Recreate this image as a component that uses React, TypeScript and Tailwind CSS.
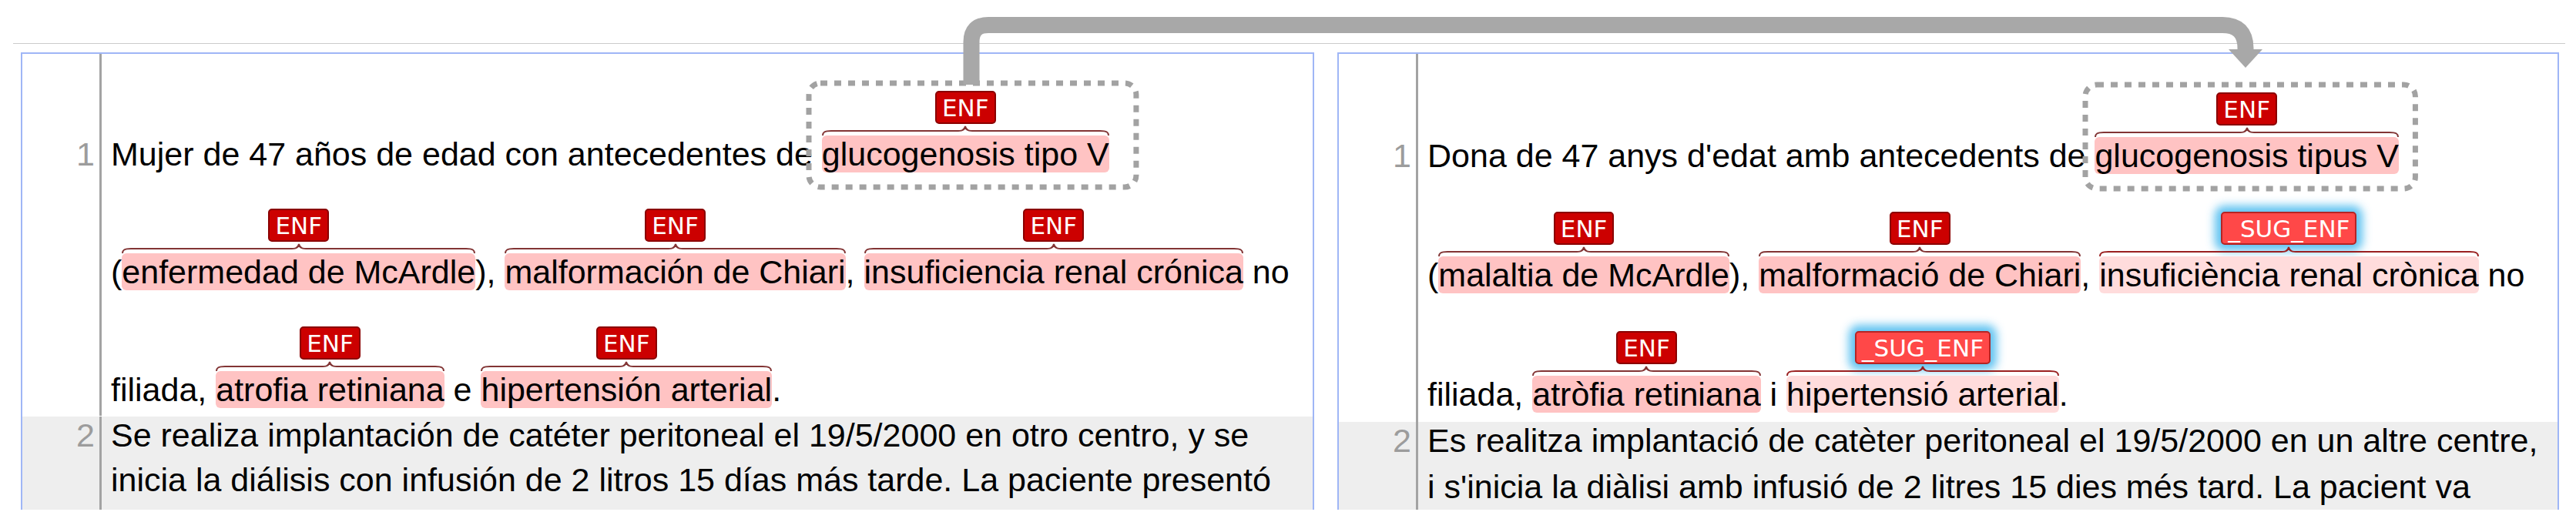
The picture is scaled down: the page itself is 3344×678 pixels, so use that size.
import React from "react";

type Ann = { t: string; sug?: boolean; box?: "L" | "R" };
type Seg = string | Ann;

function Label({ sug }: { sug?: boolean }) {
  return (
    <div
      className={`flex h-[43px] shrink-0 items-center justify-center rounded-[5px] border-2 px-[7px] pt-[1px] font-['DejaVu_Sans',sans-serif] text-[31px] leading-none text-white ${
        sug
          ? "border-[#b52424] bg-[#ff4848] shadow-[0_0_12px_8px_rgba(80,188,240,0.9)]"
          : "border-[#8a0000] bg-[#cc0000]"
      }`}
    >
      {sug ? "_SUG_ENF" : "ENF"}
    </div>
  );
}

function Brace({ sug }: { sug?: boolean }) {
  const c = sug ? "#9a2020" : "#823434";
  return (
    <div className="flex h-[15px] w-full shrink-0 items-start">
      <svg width="12" height="15" viewBox="0 0 12 15" className="shrink-0">
        <path d="M1 15 C1 11 3 9 12 9" fill="none" stroke={c} strokeWidth="2" />
      </svg>
      <div className={`mt-[8px] h-[2px] flex-1 ${sug ? "bg-[#9a2020]" : "bg-[#823434]"}`} />
      <svg width="24" height="15" viewBox="0 0 24 15" className="shrink-0">
        <path d="M0 9 C7 9 11 8.5 12 3 C13 8.5 17 9 24 9" fill="none" stroke={c} strokeWidth="2" />
      </svg>
      <div className={`mt-[8px] h-[2px] flex-1 ${sug ? "bg-[#9a2020]" : "bg-[#823434]"}`} />
      <svg width="12" height="15" viewBox="0 0 12 15" className="shrink-0">
        <path d="M0 9 C9 9 11 11 11 15" fill="none" stroke={c} strokeWidth="2" />
      </svg>
    </div>
  );
}

function DottedBox({ side }: { side: "L" | "R" }) {
  return (
    <div
      className={`pointer-events-none absolute top-[-10px] bottom-[-19px] ${
        side === "L" ? "left-[-17px] right-[-35px]" : "left-[-12px] right-[-22px]"
      }`}
    >
      <svg width="100%" height="100%" className="block overflow-visible">
        <rect
          x="0"
          y="0"
          width="100%"
          height="100%"
          rx="15"
          fill="none"
          stroke="#a2a2a2"
          strokeWidth="7"
          strokeDasharray="9 9"
        />
      </svg>
    </div>
  );
}

function SpanAnn({ a }: { a: Ann }) {
  return (
    <div className="relative flex flex-col items-center">
      <Label sug={a.sug} />
      <Brace sug={a.sug} />
      <div
        className={`whitespace-pre rounded-[6px] leading-[48px] ${
          a.sug ? "bg-[#ffdcdc]" : "bg-[#ffc3c3]"
        }`}
      >
        {a.t}
      </div>
      {a.box && <DottedBox side={a.box} />}
    </div>
  );
}

function Row({ segs, cls }: { segs: Seg[]; cls: string }) {
  return (
    <div className={`flex items-end ${cls}`}>
      {segs.map((s, i) =>
        typeof s === "string" ? (
          <span key={i} className="whitespace-pre leading-[48px]">
            {s}
          </span>
        ) : (
          <SpanAnn key={i} a={s} />
        )
      )}
    </div>
  );
}

type PanelProps = {
  width: string;
  rows: Seg[][];
  rowCls: string[];
  gutterPt: string;
  p1Pb: string;
  p2: string[];
  p2Cls: string;
};

function Panel({ width, rows, rowCls, gutterPt, p1Pb, p2, p2Cls }: PanelProps) {
  return (
    <div className={`h-[594px] shrink-0 overflow-hidden border-2 border-b-0 border-[#9fb6f6] ${width}`}>
      <div className={`flex ${p1Pb}`}>
        <div
          className={`w-[103px] shrink-0 border-r-[3px] border-[#a3a3a3] pr-[6px] text-right leading-[48px] text-[#9c9c9c] ${gutterPt}`}
        >
          1
        </div>
        <div className="flex-1 pl-[12px]">
          {rows.map((r, i) => (
            <Row key={i} segs={r} cls={rowCls[i]} />
          ))}
        </div>
      </div>
      <div className="flex bg-[#eeeeee]">
        <div className="w-[103px] shrink-0 border-r-[3px] border-[#a3a3a3] pr-[6px] text-right leading-[48px] text-[#9c9c9c]">
          2
        </div>
        <div className="flex-1 pl-[12px]">
          {p2.map((l, i) => (
            <div key={i} className={`whitespace-pre leading-[48px] ${p2Cls}`}>
              {l}
            </div>
          ))}
        </div>
      </div>
    </div>
  );
}

const leftRows: Seg[][] = [
  ["Mujer de 47 años de edad con antecedentes de ", { t: "glucogenosis tipo V", box: "L" }],
  [
    "(",
    { t: "enfermedad de McArdle" },
    "), ",
    { t: "malformación de Chiari" },
    ", ",
    { t: "insuficiencia renal crónica" },
    " no",
  ],
  ["filiada, ", { t: "atrofia retiniana" }, " e ", { t: "hipertensión arterial" }, "."],
];

const rightRows: Seg[][] = [
  ["Dona de 47 anys d'edat amb antecedents de ", { t: "glucogenosis tipus V", box: "R" }],
  [
    "(",
    { t: "malaltia de McArdle" },
    "), ",
    { t: "malformació de Chiari" },
    ", ",
    { t: "insuficiència renal crònica", sug: true },
    " no",
  ],
  ["filiada, ", { t: "atròfia retiniana" }, " i ", { t: "hipertensió arterial", sug: true }, "."],
];

export default function App() {
  return (
    <div className="relative h-[678px] w-[3344px] overflow-hidden bg-white pt-[56px] font-['Liberation_Sans',Arial,sans-serif] text-[43px] text-black">
      <div className="ml-[17px] h-px w-[3313px] bg-[#cccccc]" />
      <div className="mt-[11px] flex gap-[30px] pl-[27px]">
        <Panel
          width="w-[1679px]"
          rows={leftRows}
          rowCls={["h-[164px] pb-[10px]", "h-[153px] pb-[10px]", "h-[153px] pb-[10px]"]}
          gutterPt="pt-[106px]"
          p1Pb="pb-[1px]"
          p2={[
            "Se realiza implantación de catéter peritoneal el 19/5/2000 en otro centro, y se",
            "inicia la diálisis con infusión de 2 litros 15 días más tarde. La paciente presentó",
            " ",
          ]}
          p2Cls="h-[58px]"
        />
        <Panel
          width="w-[1586px]"
          rows={rightRows}
          rowCls={["h-[168px] pb-[12px]", "h-[155px] pb-[12px]", "h-[155px] pb-[12px]"]}
          gutterPt="pt-[108px]"
          p1Pb="pb-0"
          p2={[
            "Es realitza implantació de catèter peritoneal el 19/5/2000 en un altre centre,",
            "i s'inicia la diàlisi amb infusió de 2 litres 15 dies més tard. La pacient va",
            " ",
          ]}
          p2Cls="h-[60px]"
        />
      </div>
      <svg
        className="pointer-events-none absolute left-0 top-0"
        width="3344"
        height="120"
        viewBox="0 0 3344 120"
      >
        <path
          d="M1261 110 V54.5 Q1261 32.5 1283 32.5 H2885 Q2915 32.5 2915 62.5 V66"
          fill="none"
          stroke="#a8a8a8"
          strokeWidth="21"
        />
        <polygon points="2893,64 2937,64 2915,88" fill="#a8a8a8" />
      </svg>
    </div>
  );
}
